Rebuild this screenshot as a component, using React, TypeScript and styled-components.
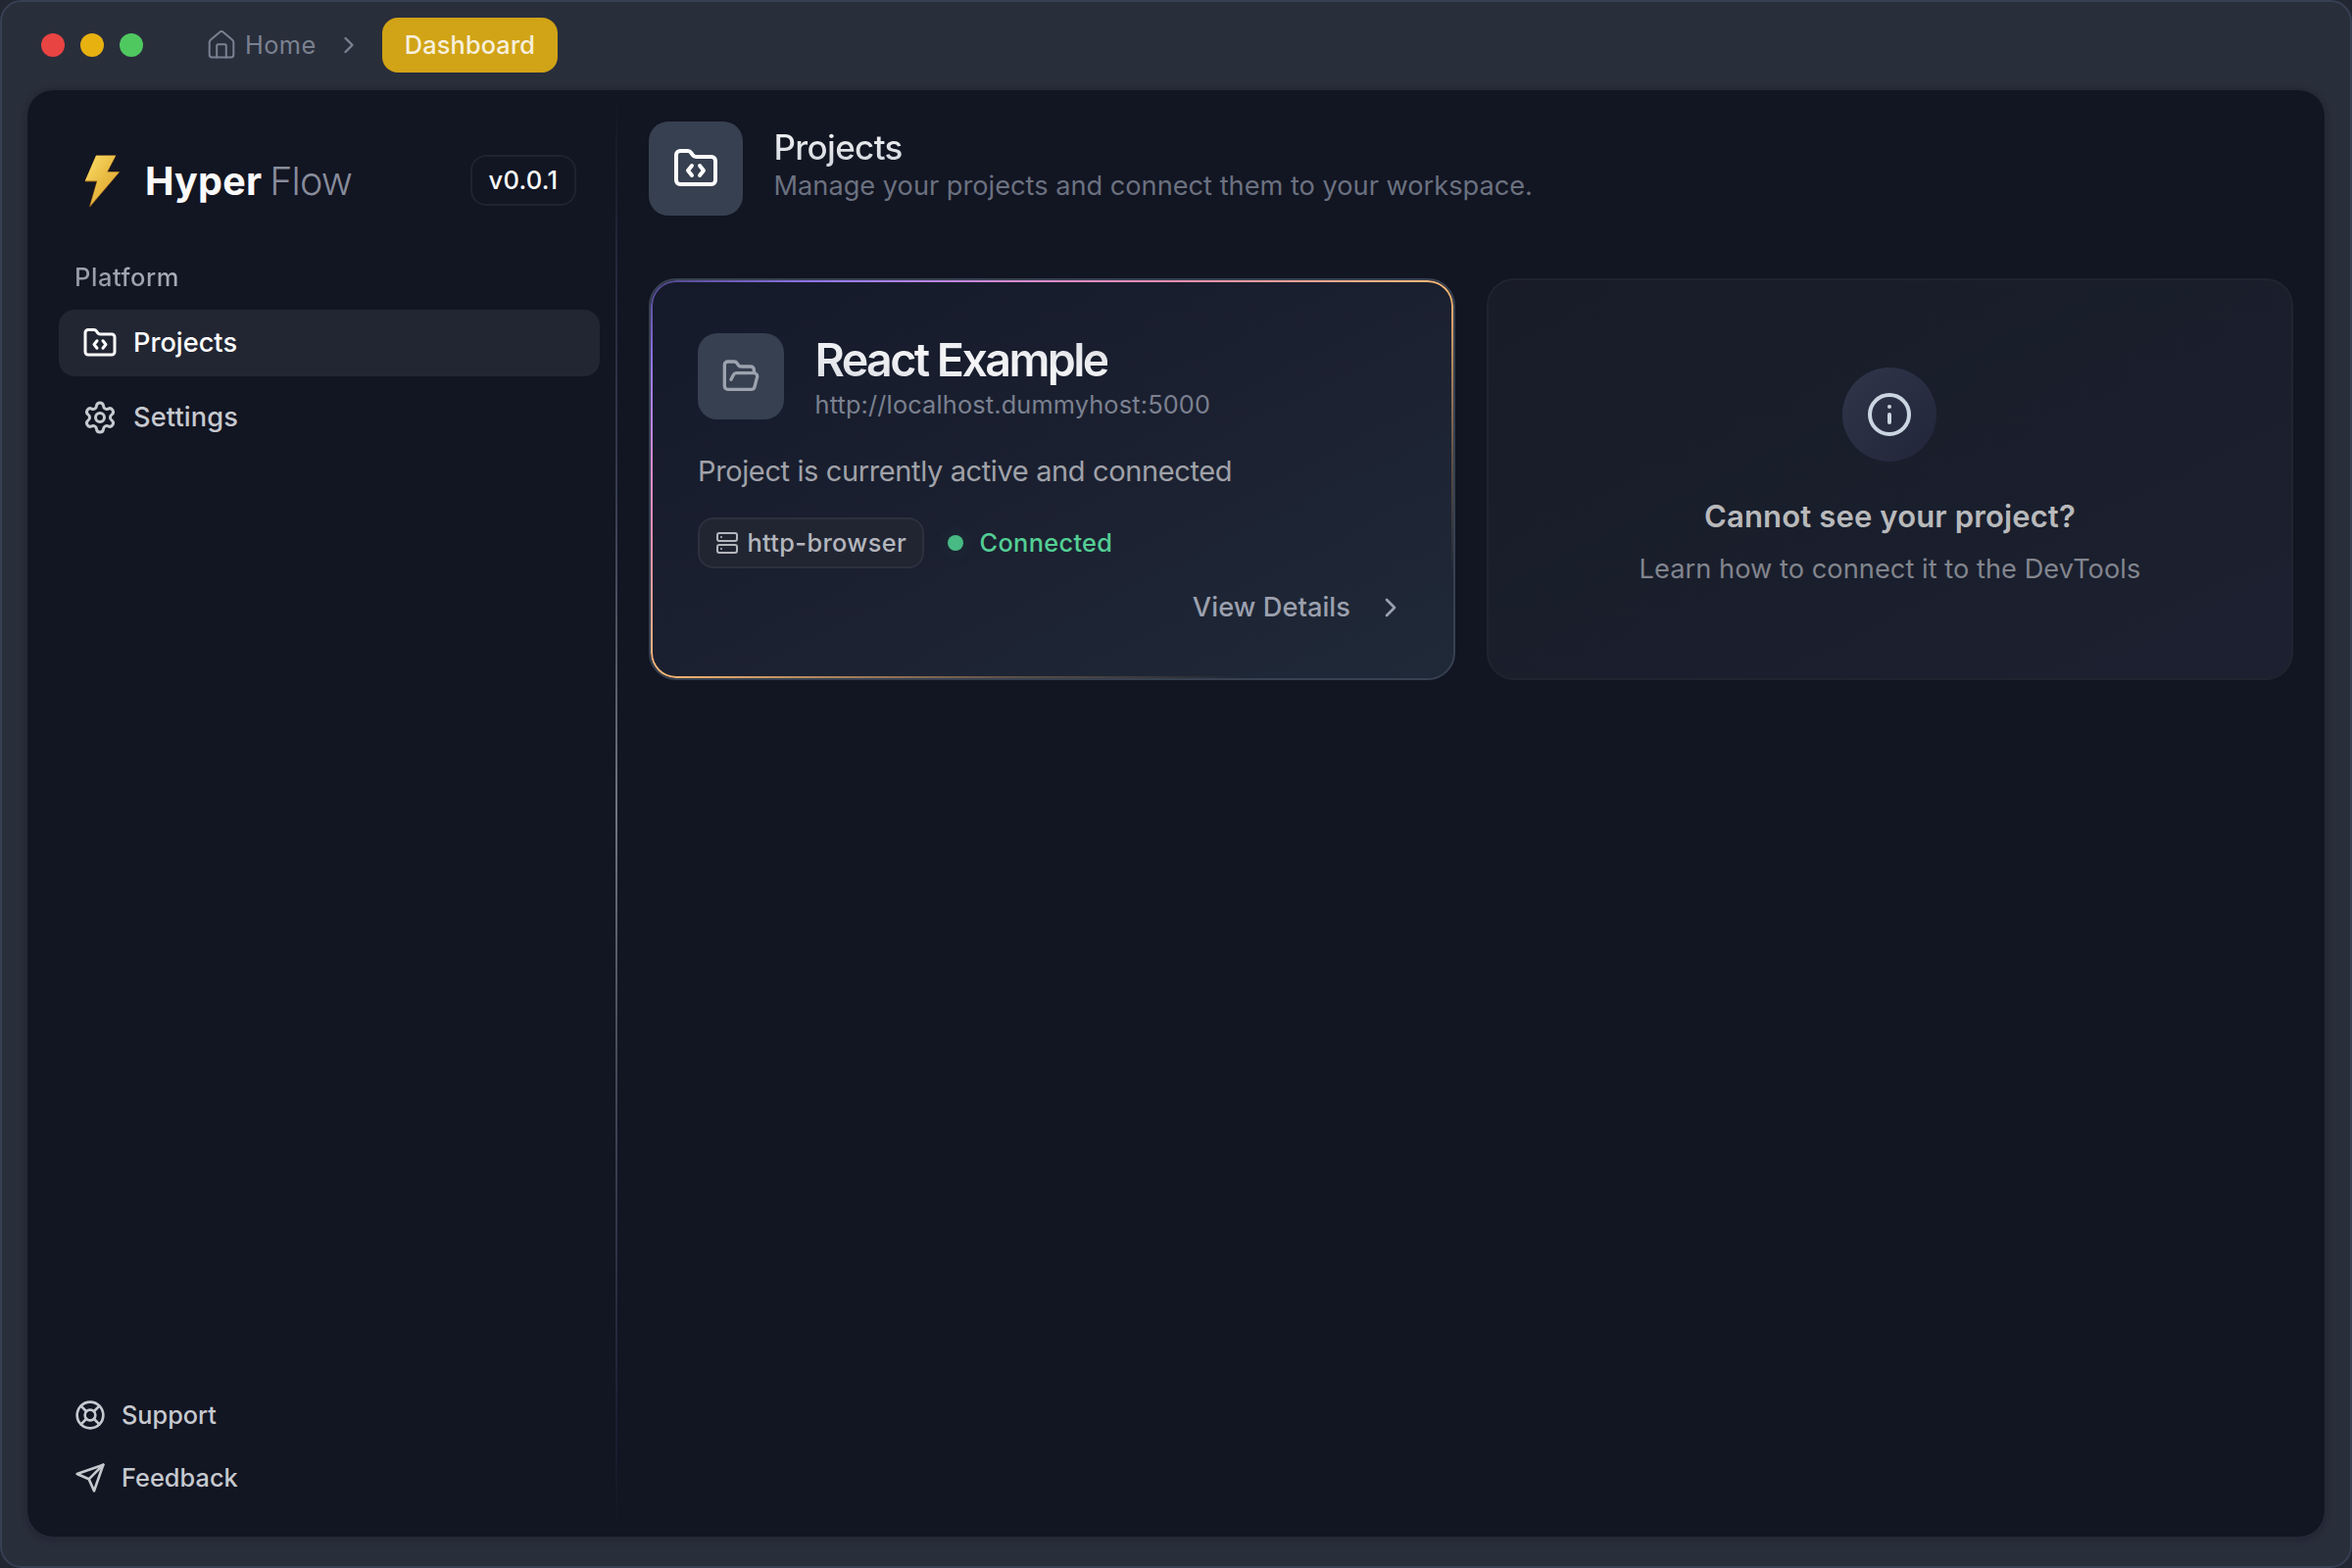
import React from 'react';
import styled, { createGlobalStyle } from 'styled-components';
import { ChevronRight, Info, LifeBuoy, Settings } from 'lucide-react';

const Global = createGlobalStyle`
  *, *::before, *::after { box-sizing: border-box; }
  html, body { margin: 0; background: #222733; }
  body { font-family: Inter, "Liberation Sans", sans-serif; -webkit-font-smoothing: antialiased; }
  svg { display: block; flex: none; }
`;

/* ---------- text ---------- */

const Text = styled.span<{
  $size: number;
  $line: number;
  $color?: string;
  $weight?: number;
  $track?: number;
}>`
  display: block;
  white-space: nowrap;
  font-size: ${(p) => p.$size}px;
  line-height: ${(p) => p.$line}px;
  font-weight: ${(p) => p.$weight ?? 400};
  letter-spacing: ${(p) => p.$track ?? 0}px;
  color: ${(p) => p.$color ?? 'inherit'};
`;

const GradientText = styled(Text)<{ $fill: string }>`
  width: max-content;
  background: ${(p) => p.$fill};
  background-clip: text;
  -webkit-background-clip: text;
  color: transparent;
`;

/* ---------- window ---------- */

const Window = styled.div`
  width: 2400px;
  height: 1600px;
  display: flex;
  flex-direction: column;
  border: 2px solid #374052;
  border-radius: 22px;
  background: #292e3b;
  overflow: hidden;
  padding: 0 24px 28px;
`;

const TitleBar = styled.header`
  height: 88px;
  flex: none;
  display: flex;
  align-items: center;
  padding-left: 16px;
`;

const TrafficLights = styled.div`
  display: flex;
  gap: 16px;
  margin-right: 64px;
`;

const Light = styled.span<{ $color: string }>`
  width: 24px;
  height: 24px;
  border-radius: 50%;
  background: ${(p) => p.$color};
`;

const Breadcrumbs = styled.nav`
  display: flex;
  align-items: center;
  color: #7b8190;
`;

const Crumb = styled.a`
  display: flex;
  align-items: center;
  gap: 8px;
  width: 132px;
`;

const ActiveCrumb = styled.span`
  display: flex;
  align-items: center;
  justify-content: center;
  width: 179px;
  height: 56px;
  margin-left: 20px;
  border-radius: 16px;
  background: #d1a316;
`;

const Panel = styled.div`
  flex: 1;
  min-height: 0;
  display: flex;
  border: 2px solid #252936;
  border-radius: 28px;
  background: #121522;
  background-clip: padding-box;
  box-shadow: 0 2px 6px rgba(20, 18, 36, 0.3);
`;

/* ---------- sidebar ---------- */

const Sidebar = styled.aside`
  width: 600px;
  flex: none;
  display: flex;
  flex-direction: column;
  padding: 66px 16px 28px 32px;
`;

const Divider = styled.div`
  width: 2px;
  flex: none;
  background: linear-gradient(
    to bottom,
    transparent,
    #23283a 12%,
    #363d50 28%,
    #70757f 50%,
    #4a4f5e 65%,
    #2b2f42 82%,
    #1e2035 91%,
    transparent
  );
`;

const Brand = styled.div`
  display: flex;
  align-items: center;
  height: 52px;
  padding: 0 24px 0 26px;
`;

const BrandName = styled.div`
  display: flex;
  gap: 8px;
  flex: 1;
  padding: 2px 0 0 25px;
`;

const Version = styled.span`
  display: flex;
  align-items: center;
  justify-content: center;
  width: 108px;
  height: 52px;
  border: 2px solid #20232f;
  border-radius: 16px;
`;

const SectionLabel = styled.div`
  padding: 0 16px;
  margin: 54px 0 12px;
`;

const NavList = styled.nav`
  display: flex;
  flex-direction: column;
  gap: 8px;
`;

const NavItem = styled.a<{ $active?: boolean }>`
  display: flex;
  align-items: center;
  gap: 16px;
  height: 68px;
  padding-left: 24px;
  border-radius: 16px;
  color: ${(p) => (p.$active ? '#fdfdfd' : '#c6c9cf')};
  background: ${(p) => (p.$active ? '#222633' : 'transparent')};
`;

const FooterNav = styled.nav`
  margin-top: auto;
`;

const FooterItem = styled.a`
  display: flex;
  align-items: center;
  gap: 16px;
  height: 64px;
  padding-left: 16px;
  color: #c6c9cf;
`;

/* ---------- main ---------- */

const Main = styled.main`
  flex: 1;
  min-width: 0;
  padding: 32px;
`;

const PageHeader = styled.div`
  display: flex;
  align-items: flex-start;
  gap: 31.5px;
  margin-bottom: 64px;
`;

const PageTitle = styled.div`
  padding-top: 6px;
`;

const Tile = styled.div<{ $size: number; $color: string }>`
  display: flex;
  align-items: center;
  justify-content: center;
  flex: none;
  width: ${(p) => p.$size}px;
  height: ${(p) => p.$size}px;
  border-radius: 20px;
  background: #374050;
  color: ${(p) => p.$color};
`;

const Cards = styled.div`
  display: grid;
  grid-template-columns: 1fr 1fr;
  gap: 32px;
`;

const Card = styled.section`
  height: 410px;
  border-radius: 28px;
  border: 2px solid #20242f;
  background: linear-gradient(to bottom right, #191b28, #191e2b 40%, #1c2030);
`;

const ProjectCard = styled(Card)`
  position: relative;
  padding: 54px 48px 0;
  border-color: #374151;
  background: linear-gradient(to bottom right, #141a2a, #1b2030 50%, #1e2635 80%, #1f2937);

  &::before {
    content: '';
    position: absolute;
    inset: 0;
    padding: 2px;
    border-radius: 26px;
    background: linear-gradient(
      to bottom right,
      #4d4486,
      #9b7cf8 12%,
      #d68bd0 23%,
      #f08fb0 33%,
      #fdba74 50%,
      rgba(253, 186, 116, 0.3) 72%,
      rgba(253, 186, 116, 0) 87%
    );
    mask: linear-gradient(#000 0 0) content-box exclude, linear-gradient(#000 0 0);
    pointer-events: none;
  }
`;

const ProjectHead = styled.div`
  display: flex;
  gap: 31.5px;
  height: 88px;
`;

const ProjectTitle = styled.div`
  margin-top: -1px;
`;

const Description = styled.div`
  margin-top: 33px;
`;

const StatusRow = styled.div`
  display: flex;
  align-items: center;
  margin-top: 27px;
`;

const Transport = styled.span`
  display: flex;
  align-items: center;
  gap: 8.5px;
  width: 231px;
  height: 52px;
  padding-left: 16px;
  border: 2px solid #2c313e;
  border-radius: 16px;
  background: #212532;
  color: #b4b6bd;
`;

const StatusDot = styled.span`
  width: 16px;
  height: 16px;
  margin: 0 16.5px 0 24px;
  border-radius: 50%;
  background: #48bb84;
  box-shadow: 0 0 12px 8px rgba(72, 187, 132, 0.03);
`;

const ViewDetails = styled.a`
  display: flex;
  align-items: center;
  justify-content: flex-end;
  gap: 25px;
  margin-top: 22px;
  height: 36px;
  color: #9ca0ae;
`;

const HelpCard = styled(Card)`
  display: flex;
  flex-direction: column;
  align-items: center;
  padding-top: 89px;
`;

const InfoBadge = styled.div`
  display: flex;
  align-items: center;
  justify-content: center;
  width: 96px;
  height: 96px;
  margin: 0 1px 37px 0;
  border-radius: 50%;
  background: linear-gradient(to bottom right, #30364a, #21253a);
  color: #cbd5e1;
`;

/* ---------- icons ---------- */

const stroke = {
  fill: 'none',
  stroke: 'currentColor',
  strokeWidth: 2,
  strokeLinecap: 'round',
  strokeLinejoin: 'round',
} as const;

const HomeIcon = () => (
  <svg width="32" height="32" viewBox="0 0 32 32" {...stroke}>
    <path d="M3.7 13.4c0-1.2.5-2.2 1.4-3L14 2.9a3 3 0 0 1 4 0l8.9 7.5c.9.8 1.4 1.8 1.4 3v12.7a2.4 2.4 0 0 1-2.4 2.4H6.1a2.4 2.4 0 0 1-2.4-2.4z" />
    <path d="M11.2 28.5V16.7a1.5 1.5 0 0 1 1.5-1.5h6.600a1.5 1.5 0 0 1 1.5 1.5v11.8" />
  </svg>
);

const BoltIcon = () => (
  <svg width="37" height="52" viewBox="0 0 37 52" overflow="visible">
    <defs>
      <linearGradient id="bolt" x1="0" y1="0" x2="1" y2="1">
        <stop offset="0" stopColor="#fbe069" />
        <stop offset="0.5" stopColor="#e9bb43" />
        <stop offset="1" stopColor="#dd9f30" />
      </linearGradient>
    </defs>
    <path
      d="M12 .6H32.600L24 17.300H36.400L6 53.200Q4.800 53.600 5.200 52.200L12.400 27.400H.5Z"
      fill="#8f5f1c"
    />
    <path d="M12 .8H32L23.200 17.600H35.600L6 52L13.300 26.600H.8Z" fill="url(#bolt)" />
  </svg>
);

const FolderCodeIcon = ({ size }: { size: number }) => (
  <svg width={size} height={size} viewBox="0 0 24 24" {...stroke}>
    <path d="M10 10.5 8 13l2 2.5" />
    <path d="m14 10.5 2 2.5-2 2.5" />
    <path d="M20 20a2 2 0 0 0 2-2V8a2 2 0 0 0-2-2h-7.9a2 2 0 0 1-1.69-.9L9.6 3.9A2 2 0 0 0 7.93 3H4a2 2 0 0 0-2 2v13a2 2 0 0 0 2 2Z" />
  </svg>
);

const FolderOpenIcon = () => (
  <svg width="40" height="40" viewBox="0 0 24 24" {...stroke}>
    <path d="m6 14 1.45-2.9A2 2 0 0 1 9.24 10H20a2 2 0 0 1 1.94 2.5l-1.55 6a2 2 0 0 1-1.94 1.5H4a2 2 0 0 1-2-2V5c0-1.1.9-2 2-2h3.93a2 2 0 0 1 1.66.9l.82 1.2a2 2 0 0 0 1.66.9H18a2 2 0 0 1 2 2v2" />
  </svg>
);

const ServerIcon = () => (
  <svg width="24" height="24" viewBox="0 0 24 24" {...stroke}>
    <rect width="20" height="8" x="2" y="2" rx="2" />
    <rect width="20" height="8" x="2" y="14" rx="2" />
    <path d="M6 6h.01M6 18h.01" />
  </svg>
);

const SendIcon = () => (
  <svg width="32" height="32" viewBox="0 0 24 24" {...stroke}>
    <path d="m22 2-7 20-4-9-9-4Z" />
    <path d="M22 2 11 13" />
  </svg>
);

/* ---------- app ---------- */

export default function App() {
  return (
    <>
      <Global />
      <Window>
        <TitleBar>
          <TrafficLights>
            <Light $color="#e84442" />
            <Light $color="#e7b110" />
            <Light $color="#50c860" />
          </TrafficLights>
          <Breadcrumbs>
            <Crumb>
              <HomeIcon />
              <Text $size={25.3} $line={36} $track={0.45}>Home</Text>
            </Crumb>
            <ChevronRight size={28} />
            <ActiveCrumb>
              <Text $size={25.3} $line={36} $weight={500} $track={0.15} $color="#f7f0dc">Dashboard</Text>
            </ActiveCrumb>
          </Breadcrumbs>
        </TitleBar>

        <Panel>
          <Sidebar>
            <Brand>
              <BoltIcon />
              <BrandName>
                <Text $size={39.5} $line={52} $weight={700} $track={0.2} $color="#fafafa">Hyper</Text>
                <Text $size={39.5} $line={52} $weight={300} $track={-0.9} $color="#888c9b">Flow</Text>
              </BrandName>
              <Version>
                <Text $size={25.5} $line={36} $weight={500} $track={0.25} $color="#fafafa">v0.0.1</Text>
              </Version>
            </Brand>

            <SectionLabel>
              <GradientText
                $size={25.5}
                $line={38}
                $weight={500}
                $track={0.55}
                $fill="linear-gradient(to top right, #8b909e, #b4b7c0)"
              >
                Platform
              </GradientText>
            </SectionLabel>
            <NavList style={{ marginTop: 2 }}>
              <NavItem $active>
                <FolderCodeIcon size={36} />
                <Text $size={27.2} $line={38} $weight={500}>Projects</Text>
              </NavItem>
              <NavItem>
                <Settings size={36} />
                <Text $size={27.2} $line={38} $weight={500} $track={0.12}>Settings</Text>
              </NavItem>
            </NavList>

            <FooterNav>
              <FooterItem>
                <LifeBuoy size={32} />
                <Text $size={25.3} $line={36} $weight={500}>Support</Text>
              </FooterItem>
              <FooterItem>
                <SendIcon />
                <Text $size={25.3} $line={36} $weight={500} $track={0.05}>Feedback</Text>
              </FooterItem>
            </FooterNav>
          </Sidebar>

          <Divider />

          <Main>
            <PageHeader>
              <Tile $size={96} $color="#fdfdfd">
                <FolderCodeIcon size={48} />
              </Tile>
              <PageTitle>
                <GradientText
                  $size={35}
                  $line={40}
                  $weight={500}
                  $track={-0.65}
                  $fill="linear-gradient(to top, #d1d5db, #f4f4f6)"
                >
                  Projects
                </GradientText>
                <Text $size={27.2} $line={40} $color="#6b7180">
                  Manage your projects and connect them to your workspace.
                </Text>
              </PageTitle>
            </PageHeader>

            <Cards>
              <ProjectCard>
                <ProjectHead>
                  <Tile $size={88} $color="#9ca3af">
                    <FolderOpenIcon />
                  </Tile>
                  <ProjectTitle>
                    <GradientText
                      $size={46.6}
                      $line={56}
                      $weight={600}
                      $track={-2.6}
                      $fill="linear-gradient(to top right, #d5d9e0, #f5f5f7 50%, #d8dae0)"
                    >
                      React Example
                    </GradientText>
                    <Text $size={25.3} $line={36} $track={0.17} $color="#7b8190">
                      http://localhost.dummyhost:5000
                    </Text>
                  </ProjectTitle>
                </ProjectHead>
                <Description>
                  <Text $size={29} $line={40} $track={-0.38} $color="#a0a2a9">
                    Project is currently active and connected
                  </Text>
                </Description>
                <StatusRow>
                  <Transport>
                    <ServerIcon />
                    <Text $size={25.3} $line={36} $weight={500} $track={0.37}>http-browser</Text>
                  </Transport>
                  <StatusDot />
                  <Text $size={25.3} $line={36} $weight={500} $track={0.36} $color="#54cf95">
                    Connected
                  </Text>
                </StatusRow>
                <ViewDetails>
                  <Text $size={27.2} $line={36} $weight={500} $track={0.08}>View Details</Text>
                  <ChevronRight size={32} />
                </ViewDetails>
              </ProjectCard>

              <HelpCard>
                <InfoBadge>
                  <Info size={48} />
                </InfoBadge>
                <Text $size={31} $line={38} $weight={600} $track={0.14} $color="#b8b9bb">
                  Cannot see your project?
                </Text>
                <Text $size={27.2} $line={70} $track={0.05} $color="#82858e">
                  Learn how to connect it to the DevTools
                </Text>
              </HelpCard>
            </Cards>
          </Main>
        </Panel>
      </Window>
    </>
  );
}
